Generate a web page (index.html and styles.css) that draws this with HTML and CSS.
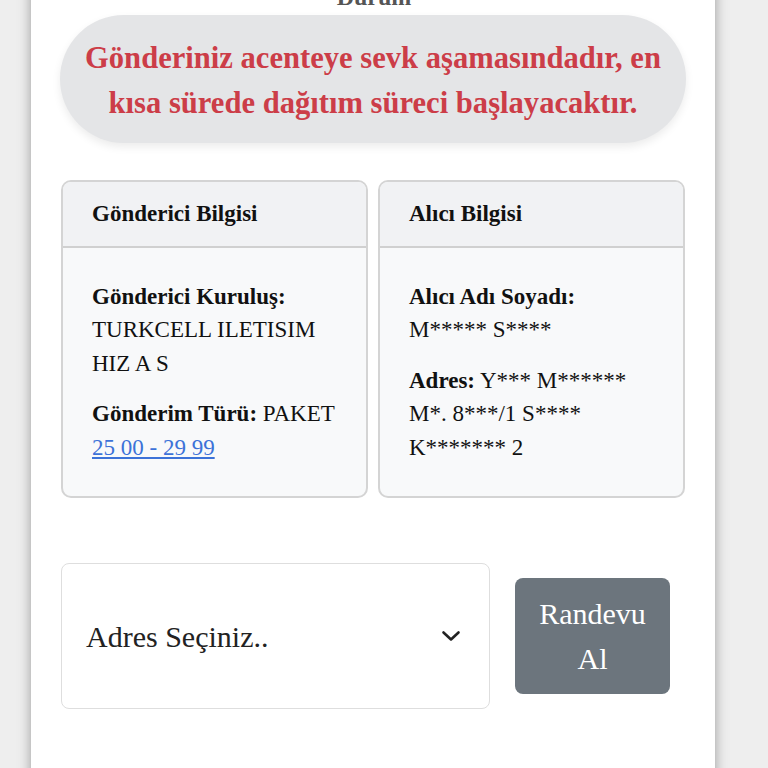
FILE: index.html
```html
<!DOCTYPE html>
<html lang="tr">
<head>
<meta charset="utf-8">
<title>Durum</title>
<link rel="stylesheet" href="styles.css">
</head>
<body>
<div class="page">
  <main class="panel">
    <h2 class="title">Durum</h2>
    <div class="status">Gönderiniz acenteye sevk aşamasındadır, en kısa sürede dağıtım süreci başlayacaktır.</div>

    <section class="cards">
      <div class="card">
        <div class="card-head">Gönderici Bilgisi</div>
        <div class="card-body">
          <p><b>Gönderici Kuruluş:</b> TURKCELL ILETISIM HIZ A S</p>
          <p><b>Gönderim Türü:</b> PAKET<br><a href="#" class="link">25 00 - 29 99</a></p>
        </div>
      </div>
      <div class="card">
        <div class="card-head">Alıcı Bilgisi</div>
        <div class="card-body">
          <p><b>Alıcı Adı Soyadı:</b> M***** S****</p>
          <p><b>Adres:</b> Y*** M****** M*. 8***/1 S**** K******* 2</p>
        </div>
      </div>
    </section>

    <section class="actions">
      <div class="select">
        <span class="select-text">Adres Seçiniz..</span>
        <svg class="chev" width="20" height="12" viewBox="0 0 20 12"><path d="M2.5 2.5 L10 9.5 L17.5 2.5" fill="none" stroke="#222" stroke-width="2.6" stroke-linecap="round" stroke-linejoin="round"/></svg>
      </div>
      <button class="btn">Randevu Al</button>
    </section>
  </main>
</div>
</body>
</html>
```

FILE: styles.css
```css
html, body {
  margin: 0;
  padding: 0;
  background: #eeeeee;
  height: 100%;
  overflow: hidden;
}
.page {
  font-family: "Liberation Serif", "Times New Roman", serif;
  display: flex;
  justify-content: flex-start;
  padding-left: 31px;
}
.panel {
  width: 624px;
  min-height: 900px;
  background: #ffffff;
  padding: 0 30px;
  box-shadow: 0 0 12px rgba(0, 0, 0, 0.35);
  margin-top: -17px;
}
.title {
  margin: 0 0 3px;
  text-align: center;
  font-size: 24px;
  line-height: 29px;
  font-weight: bold;
  color: #555555;
  padding-left: 2px;
}
.status {
  background: #e4e5e7;
  border-radius: 64px;
  padding: 21px 16px 17px;
  text-align: center;
  color: #cc3d48;
  font-weight: bold;
  font-size: 30.6px;
  line-height: 45px;
  box-shadow: 0 4px 8px rgba(0, 0, 0, 0.08);
  margin: 0 -1px;
}
.cards {
  margin-top: 37px;
  display: grid;
  grid-template-columns: 1fr 1fr;
  gap: 10px;
}
.card {
  border: 2px solid #d4d4d4;
  border-radius: 10px;
  background: #f8f9fa;
  overflow: hidden;
  font-size: 23px;
  line-height: 33.5px;
  color: #111;
}
.card-head {
  background: #f1f2f4;
  border-bottom: 2px solid #d0d0d0;
  padding: 15px 29px;
  font-weight: bold;
}
.card-body {
  padding: 16px 29px 15px;
}
.card-body p {
  margin: 16px 0 17px;
}
.link {
  color: #3c72d8;
  text-decoration: underline;
}
.actions {
  margin-top: 65px;
  display: flex;
  align-items: center;
  gap: 25px;
}
.select {
  width: 429px;
  height: 146px;
  box-sizing: border-box;
  border: 1.5px solid #dedede;
  border-radius: 8px;
  background: #fff;
  display: flex;
  align-items: center;
  justify-content: space-between;
  padding: 0 28px 0 24px;
  font-size: 30px;
  color: #222;
}
.select-text {
  line-height: 45px;
}
.chev {
  display: block;
}
.btn {
  width: 155px;
  padding: 13px 20px;
  border: none;
  border-radius: 8px;
  background: #6c757d;
  color: #ffffff;
  font-family: "Liberation Serif", "Times New Roman", serif;
  font-size: 30px;
  line-height: 45px;
  text-align: center;
}
```
